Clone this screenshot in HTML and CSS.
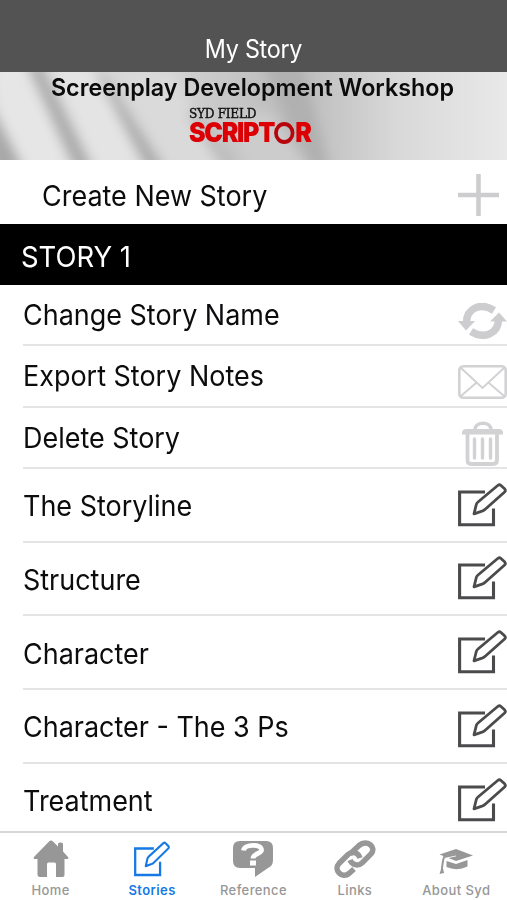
FILE: index.html
```html
<!DOCTYPE html>
<html lang="en">
<head>
<meta charset="utf-8">
<title>My Story</title>
<link rel="stylesheet" href="styles.css">
</head>
<body>
<svg width="0" height="0" class="defs" aria-hidden="true">
  <symbol id="edit" viewBox="0 0 49 44">
    <path d="M27 9H1.600V41.800H35.500V25.500" fill="none" stroke="currentColor" stroke-width="3.100"/>
    <path d="M16 30.800L18.300 21.500Q18.800 20 20 19L40 2.300Q41.500 1.200 43 2.500L46.800 6Q48 7.500 46.600 9L27.500 26Q26 27.500 24 28.200Z" fill="none" stroke="currentColor" stroke-width="2.800" stroke-linejoin="round"/>
  </symbol>
</svg>
<header class="navbar"><h1>My Story</h1></header>
<section class="banner">
  <svg class="folds" viewBox="0 0 507 88" preserveAspectRatio="none" aria-hidden="true">
    <defs>
      <linearGradient id="base"><stop offset="0" stop-color="#d4d4d4"/><stop offset=".3" stop-color="#d6d6d6"/><stop offset=".44" stop-color="#c8c8c8"/><stop offset=".58" stop-color="#bababa"/><stop offset=".78" stop-color="#d8d8d8"/><stop offset="1" stop-color="#e9e9e9"/></linearGradient>
      <filter id="soft" x="-30%" y="-30%" width="160%" height="160%"><feGaussianBlur stdDeviation="6"/></filter>
    </defs>
    <rect width="507" height="88" fill="url(#base)"/>
    <g filter="url(#soft)">
      <path d="M-10 30L24 98H-10Z" fill="#a8a8a8"/>
      <path d="M-10 -10H24L76 98H26L-4 40Z" fill="#e6e6e6"/>
      <path d="M26 -8H40L94 98H74Z" fill="#acacac"/>
      <path d="M48 -10H88L146 98H96Z" fill="#e4e4e4"/>
      <path d="M94 -4L146 98H166L108 10Z" fill="#acacac"/>
      <path d="M120 0H172L226 98H168Z" fill="#dadada"/>
      <path d="M186 40L224 98H240L196 40Z" fill="#bababa"/>
      <path d="M262 -10H300L330 98H312Z" fill="#b0b0b0"/>
      <path d="M230 40H270L310 98H245Z" fill="#cccccc"/>
    </g>
  </svg>
  <h2>Screenplay Development Workshop</h2>
  <div class="logo"><span class="syd">SYD FIELD</span><span class="scriptor">SCRIPT<i></i>R</span></div>
</section>
<main>
  <div class="row create"><span>Create New Story</span>
    <svg width="49" height="42" viewBox="0 0 49 42"><path d="M20.500 0V42M0 21H41" stroke="#cdcdcf" stroke-width="4.600"/></svg></div>
  <div class="section"><span>STORY 1</span></div>
  <ul class="list">
    <li class="row short"><span>Change Story Name</span>
      <svg class="low" width="49" height="36" viewBox="0 0 49 36" fill="none" stroke="#cdcdcf" stroke-width="7.500"><path d="M8.500 20C8.500 5 23 -1 36 7.500M40.500 16C40.500 31 26 36.500 13 28.500"/><path d="M0 18H17L8 27.500ZM32 18.500L41 9.500L49 18.500Z" fill="#cdcdcf" stroke="none"/></svg></li>
    <li class="row short"><span>Export Story Notes</span>
      <svg class="low" width="49" height="34" viewBox="0 0 49 34" fill="none" stroke="#d2d2d4" stroke-width="2.600"><rect x="1.300" y="1.300" width="46.400" height="31.400" rx="4"/><path d="M3 3L24.500 23L46 3M3 31L18 18M46 31L31 18" stroke-width="2"/></svg></li>
    <li class="row short"><span>Delete Story</span>
      <svg class="low" width="49" height="45" viewBox="0 0 49 45" fill="none" stroke="#d2d2d4"><path d="M17 9C17 0 33 0 33 9" stroke-width="3.500"/><path d="M4 13.500V11Q5 8 8 8H41Q44 8 45 11V13.500Z" fill="#d2d2d4" stroke="none"/><path d="M9.500 12V39Q9.500 43 13.500 43H35Q39 43 39 39V12" stroke-width="3.800"/><path d="M16.500 18V37M24.500 18V37M32.500 18V37" stroke-width="3.400" stroke-linecap="round"/></svg></li>
    <li class="row"><span>The Storyline</span><svg class="edit"><use href="#edit"/></svg></li>
    <li class="row"><span>Structure</span><svg class="edit"><use href="#edit"/></svg></li>
    <li class="row"><span>Character</span><svg class="edit"><use href="#edit"/></svg></li>
    <li class="row"><span>Character - The 3 Ps</span><svg class="edit"><use href="#edit"/></svg></li>
    <li class="row"><span>Treatment</span><svg class="edit"><use href="#edit"/></svg></li>
  </ul>
</main>
<nav class="tabs">
  <a><svg width="36" height="38" viewBox="0 0 36 38"><path d="M18 .5Q19 .5 20 1.500L25 6.500V4Q25 2.500 27 2.500H28Q30 2.500 30 4V11.500L35 17Q36 19 34 19H31.500V35Q31.500 37 29.500 37H23V24Q23 22.500 21.500 22.500H15.500Q14 22.500 14 24V37H7Q4.500 37 4.500 35V19H2Q0 19 1 17L16 1.500Q17 .5 18 .5Z" fill="currentColor"/></svg><span>Home</span></a>
  <a class="active"><svg width="36" height="36" viewBox="0 0 49 47" preserveAspectRatio="none"><use href="#edit" width="49" height="47"/></svg><span>Stories</span></a>
  <a><svg width="42" height="38" viewBox="0 0 42 38"><path d="M8 1H34Q41 1 41 8V20Q41 26 36 28L23 37V28H8Q1 28 1 21V8Q1 1 8 1Z" fill="currentColor"/><path d="M11.500 10.500C12.500 4 29.500 3.500 29.500 10C29.500 14 21 13 21 18.500" fill="none" stroke="#fff" stroke-width="4.800"/><path d="M18 20.500H24V25.500H18Z" fill="#fff"/></svg><span>Reference</span></a>
  <a><svg width="42" height="38" viewBox="0 0 42 38" fill="none" stroke="currentColor" stroke-width="5.500"><path d="M16 14L25 5.500C33 -1 43 7 37 14L28 23C24 26.500 18 25 16 20"/><path d="M26 18C24 12 18 11 14 14.500L5 23.500C-1 30 8 39 15 33.500L20 29"/></svg><span>Links</span></a>
  <a><svg width="36" height="38" viewBox="0 0 36 38"><path d="M1.500 14.500L18 9L35 15.500L18 21Z" fill="currentColor"/><path d="M8.500 21L18 24L29.500 20V26.500Q19 31.500 8.500 27Z" fill="currentColor"/><path d="M18 15L7 17.500Q4.500 22 5 28" fill="none" stroke="#fff" stroke-width="2.400"/><path d="M18 14.500L6 17Q4.500 22 3.500 33" fill="none" stroke="currentColor" stroke-width="2"/><path d="M4.500 26L6 33L1.500 34Z" fill="currentColor"/></svg><span>About Syd</span></a>
</nav>
</body>
</html>
```
FILE: styles.css
```css
* { box-sizing: border-box; }
body { margin: 0; width: 507px; height: 900px; overflow: hidden; background: #fff; color: #0c0c0e; font-family: Inter, "Liberation Sans", sans-serif; display: flex; flex-direction: column; }
.defs { position: absolute; }
h1, h2, ul { margin: 0; padding: 0; font-weight: 400; }
.navbar { height: 72px; flex: none; background: #535353; color: #fff; text-align: center; padding-top: 33px; }
.navbar h1 { font-size: 25px; line-height: 32px; letter-spacing: -.3px; transform: scaleX(.935); }
.banner { position: relative; height: 88px; flex: none; text-align: center; overflow: hidden; }
.folds { position: absolute; inset: 0; width: 507px; height: 88px; }
.banner h2 { position: relative; left: -1px; font-size: 24px; line-height: 31px; font-weight: 600; color: #0b0b0b; white-space: nowrap; transform: scaleX(.971); }
.logo { position: relative; margin-left: 189px; display: flex; flex-direction: column; align-items: flex-start; }
.syd { font: 12.500px/13px "DejaVu Serif", serif; letter-spacing: -.3px; margin-top: 4px; white-space: nowrap; color: #111; -webkit-text-stroke: .4px #111; transform: scaleX(.97); transform-origin: left; }
.scriptor { display: flex; align-items: center; margin-top: 1px; font: 900 27px/24px Inter, sans-serif; color: #dc0005; letter-spacing: -1.400px; transform: scaleX(.925); transform-origin: left; }
.scriptor i { width: 22px; height: 22px; border: 4px solid #b8050b; border-radius: 50%; margin: 0 1px 0 0; }
.row { display: flex; align-items: center; justify-content: space-between; font-size: 28.500px; white-space: nowrap; }
.row span, .section span { display: inline-block; transform: scaleX(.946); transform-origin: left; }
.row svg { flex: none; color: #4b4b4d; }
.create { height: 64px; padding-left: 42px; padding-top: 6px; }
.section { height: 61px; background: #000; color: #fff; padding-left: 21px; font-size: 29px; line-height: 65px; }
.list { list-style: none; padding-left: 23px; }
.list .row { height: 73.700px; padding-top: 2px; border-bottom: 2px solid #e4e4e6; }
.list .row:last-child { border: 0; padding-top: 0; }
.list .short { height: 61.300px; padding-top: 0; }
.low { margin-top: 12px; }
.edit { width: 49px; height: 44px; margin-bottom: 2px; }
.list .row:last-child .edit { margin-bottom: 0; }
.tabs { position: absolute; left: 0; right: 0; bottom: 0; height: 69px; background: #fff; border-top: 2px solid #d8d8d8; display: grid; grid-template-columns: repeat(5, 1fr); color: #979797; }
.tabs a { display: flex; flex-direction: column; align-items: center; padding-top: 7px; font-size: 13px; font-weight: 500; line-height: 18px; letter-spacing: .4px; }
.tabs svg { height: 38px; margin-bottom: 3px; }
.tabs .active { color: #1679e4; font-weight: 600; }
```
